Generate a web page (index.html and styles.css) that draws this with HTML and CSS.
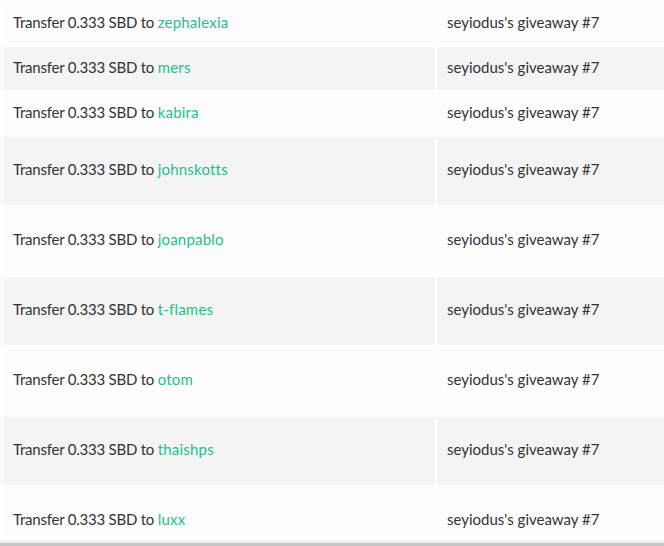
FILE: index.html
```html
<!DOCTYPE html>
<html>
<head>
<meta charset="utf-8">
<link rel="stylesheet" href="styles.css">
</head>
<body>
<div class="table">
  <div class="row odd short"><div class="cell edge"></div><div class="cell"><span><span class="pre">Transfer 0.333 SBD to </span><a href="#">zephalexia</a></span></div><div class="cell"><span>seyiodus's giveaway #7</span></div></div>
  <div class="row even short"><div class="cell edge"></div><div class="cell"><span><span class="pre">Transfer 0.333 SBD to </span><a href="#">mers</a></span></div><div class="cell"><span>seyiodus's giveaway #7</span></div></div>
  <div class="row odd short"><div class="cell edge"></div><div class="cell"><span><span class="pre">Transfer 0.333 SBD to </span><a href="#">kabira</a></span></div><div class="cell"><span>seyiodus's giveaway #7</span></div></div>
  <div class="row even tall"><div class="cell edge"></div><div class="cell"><span><span class="pre">Transfer 0.333 SBD to </span><a href="#">johnskotts</a></span></div><div class="cell"><span>seyiodus's giveaway #7</span></div></div>
  <div class="row odd tall"><div class="cell edge"></div><div class="cell"><span><span class="pre">Transfer 0.333 SBD to </span><a href="#">joanpablo</a></span></div><div class="cell"><span>seyiodus's giveaway #7</span></div></div>
  <div class="row even tall"><div class="cell edge"></div><div class="cell"><span><span class="pre">Transfer 0.333 SBD to </span><a href="#">t-flames</a></span></div><div class="cell"><span>seyiodus's giveaway #7</span></div></div>
  <div class="row odd tall"><div class="cell edge"></div><div class="cell"><span><span class="pre">Transfer 0.333 SBD to </span><a href="#">otom</a></span></div><div class="cell"><span>seyiodus's giveaway #7</span></div></div>
  <div class="row even tall"><div class="cell edge"></div><div class="cell"><span><span class="pre">Transfer 0.333 SBD to </span><a href="#">thaishps</a></span></div><div class="cell"><span>seyiodus's giveaway #7</span></div></div>
  <div class="row odd tall"><div class="cell edge"></div><div class="cell"><span><span class="pre">Transfer 0.333 SBD to </span><a href="#">luxx</a></span></div><div class="cell"><span>seyiodus's giveaway #7</span></div></div>
</div>
<div class="hscroll"></div>
</body>
</html>
```
FILE: styles.css
```css
html, body {
  margin: 0;
  padding: 0;
  background: #ffffff;
  overflow: hidden;
}
body {
  font-family: "Lato", "Noto Sans", sans-serif;
  font-size: 15px;
  color: #333333;
}
.table {
  display: flex;
  flex-direction: column;
  gap: 2px;
  margin-left: -19px;
  margin-top: 2px;
}
.row {
  display: grid;
  grid-template-columns: 20px 432px 240px;
  column-gap: 2px;
}
.short { height: 43px; }
.tall { height: 68px; }
.cell {
  display: flex;
  align-items: center;
  padding: 0 10px 4px;
  white-space: nowrap;
}
.cell.edge { padding: 0; }
.odd .cell { background: #fdfdfd; }
.even .cell { background: #f4f4f4; }
.pre { letter-spacing: -0.23px; }
a {
  color: #1fbf8f;
  text-decoration: none;
  letter-spacing: 0.2px;
}
.hscroll {
  position: fixed;
  left: 0;
  right: 0;
  bottom: 0;
  height: 3px;
  background: #c6c6c6;
  border-top: 2px solid #ececec;
}
```
